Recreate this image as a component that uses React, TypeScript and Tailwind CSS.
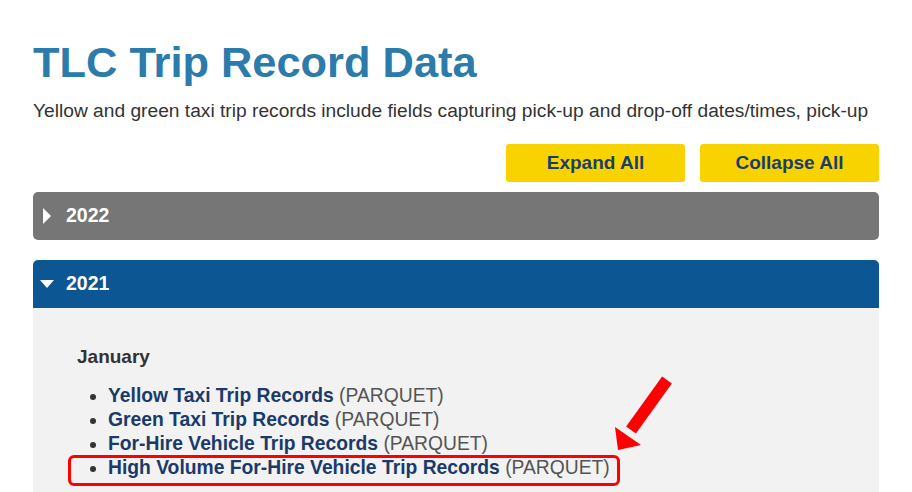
import React from 'react';

const months = [
  { name: 'Yellow Taxi Trip Records' },
  { name: 'Green Taxi Trip Records' },
  { name: 'For-Hire Vehicle Trip Records' },
  { name: 'High Volume For-Hire Vehicle Trip Records' },
];

function Caret({ open }: { open?: boolean }) {
  if (open) {
    return (
      <svg width="14" height="10" viewBox="0 0 14 10" className="shrink-0">
        <path d="M0 1h14L7 9z" fill="#fff" />
      </svg>
    );
  }
  return (
    <svg width="10" height="16" viewBox="0 0 10 16" className="shrink-0">
      <path d="M1 0v16l8-8z" fill="#fff" />
    </svg>
  );
}

export default function App() {
  return (
    <div
      className="relative w-[912px] h-[492px] overflow-hidden bg-white"
      style={{ fontFamily: '"Liberation Sans", Arial, sans-serif' }}
    >
      <div className="px-[33px] pt-[38px]">
        <h1 className="text-[43.4px] leading-[48px] font-bold text-[#2b7bab]">TLC Trip Record Data</h1>
        <p className="mt-[13px] text-[19.2px] leading-[24px] text-[#333] whitespace-nowrap">
          Yellow and green taxi trip records include fields capturing pick-up and drop-off dates/times, pick-up
        </p>

        <div className="mt-[21px] flex justify-end gap-[15px]">
          <button className="w-[179px] h-[38px] rounded-[3px] bg-[#f8d300] text-[#1b3d6d] text-[19px] font-bold">
            Expand All
          </button>
          <button className="w-[179px] h-[38px] rounded-[3px] bg-[#f8d300] text-[#1b3d6d] text-[19px] font-bold">
            Collapse All
          </button>
        </div>

        <div className="mt-[10px] h-[48px] rounded-[5px] bg-[#767676] flex items-center gap-[14px] pl-[9px]">
          <Caret />
          <span className="text-white text-[19.5px] font-bold">2022</span>
        </div>

        <div className="mt-[20px]">
          <div className="h-[48px] rounded-t-[5px] bg-[#0b5693] flex items-center gap-[12px] pl-[7px]">
            <Caret open />
            <span className="text-white text-[19.5px] font-bold">2021</span>
          </div>
          <div className="bg-[#f2f2f2] h-[200px] pl-[44px] pt-[37px]">
            <h3 className="text-[19px] leading-[24px] font-bold text-[#333]">January</h3>
            <ul className="mt-[15px] pl-[31px] list-disc text-[19.3px] leading-[24px] marker:text-[#333]">
              {months.map((m) => (
                <li key={m.name}>
                  <a className="font-bold text-[#1a3a6a]">{m.name}</a>{' '}
                  <span className="text-[#555]">(PARQUET)</span>
                </li>
              ))}
            </ul>
          </div>
        </div>
      </div>

      {/* annotation */}
      <div className="absolute left-[68px] top-[455px] w-[552px] h-[31px] rounded-[6px] border-[3px] border-[#ff0000]" />
      <svg className="absolute left-0 top-0" width="912" height="492" viewBox="0 0 912 492">
        <line x1="667" y1="380" x2="631" y2="430" stroke="#ff0000" strokeWidth="12" />
        <path d="M618 450L641 445L615 427z" fill="#ff0000" />
      </svg>
    </div>
  );
}
